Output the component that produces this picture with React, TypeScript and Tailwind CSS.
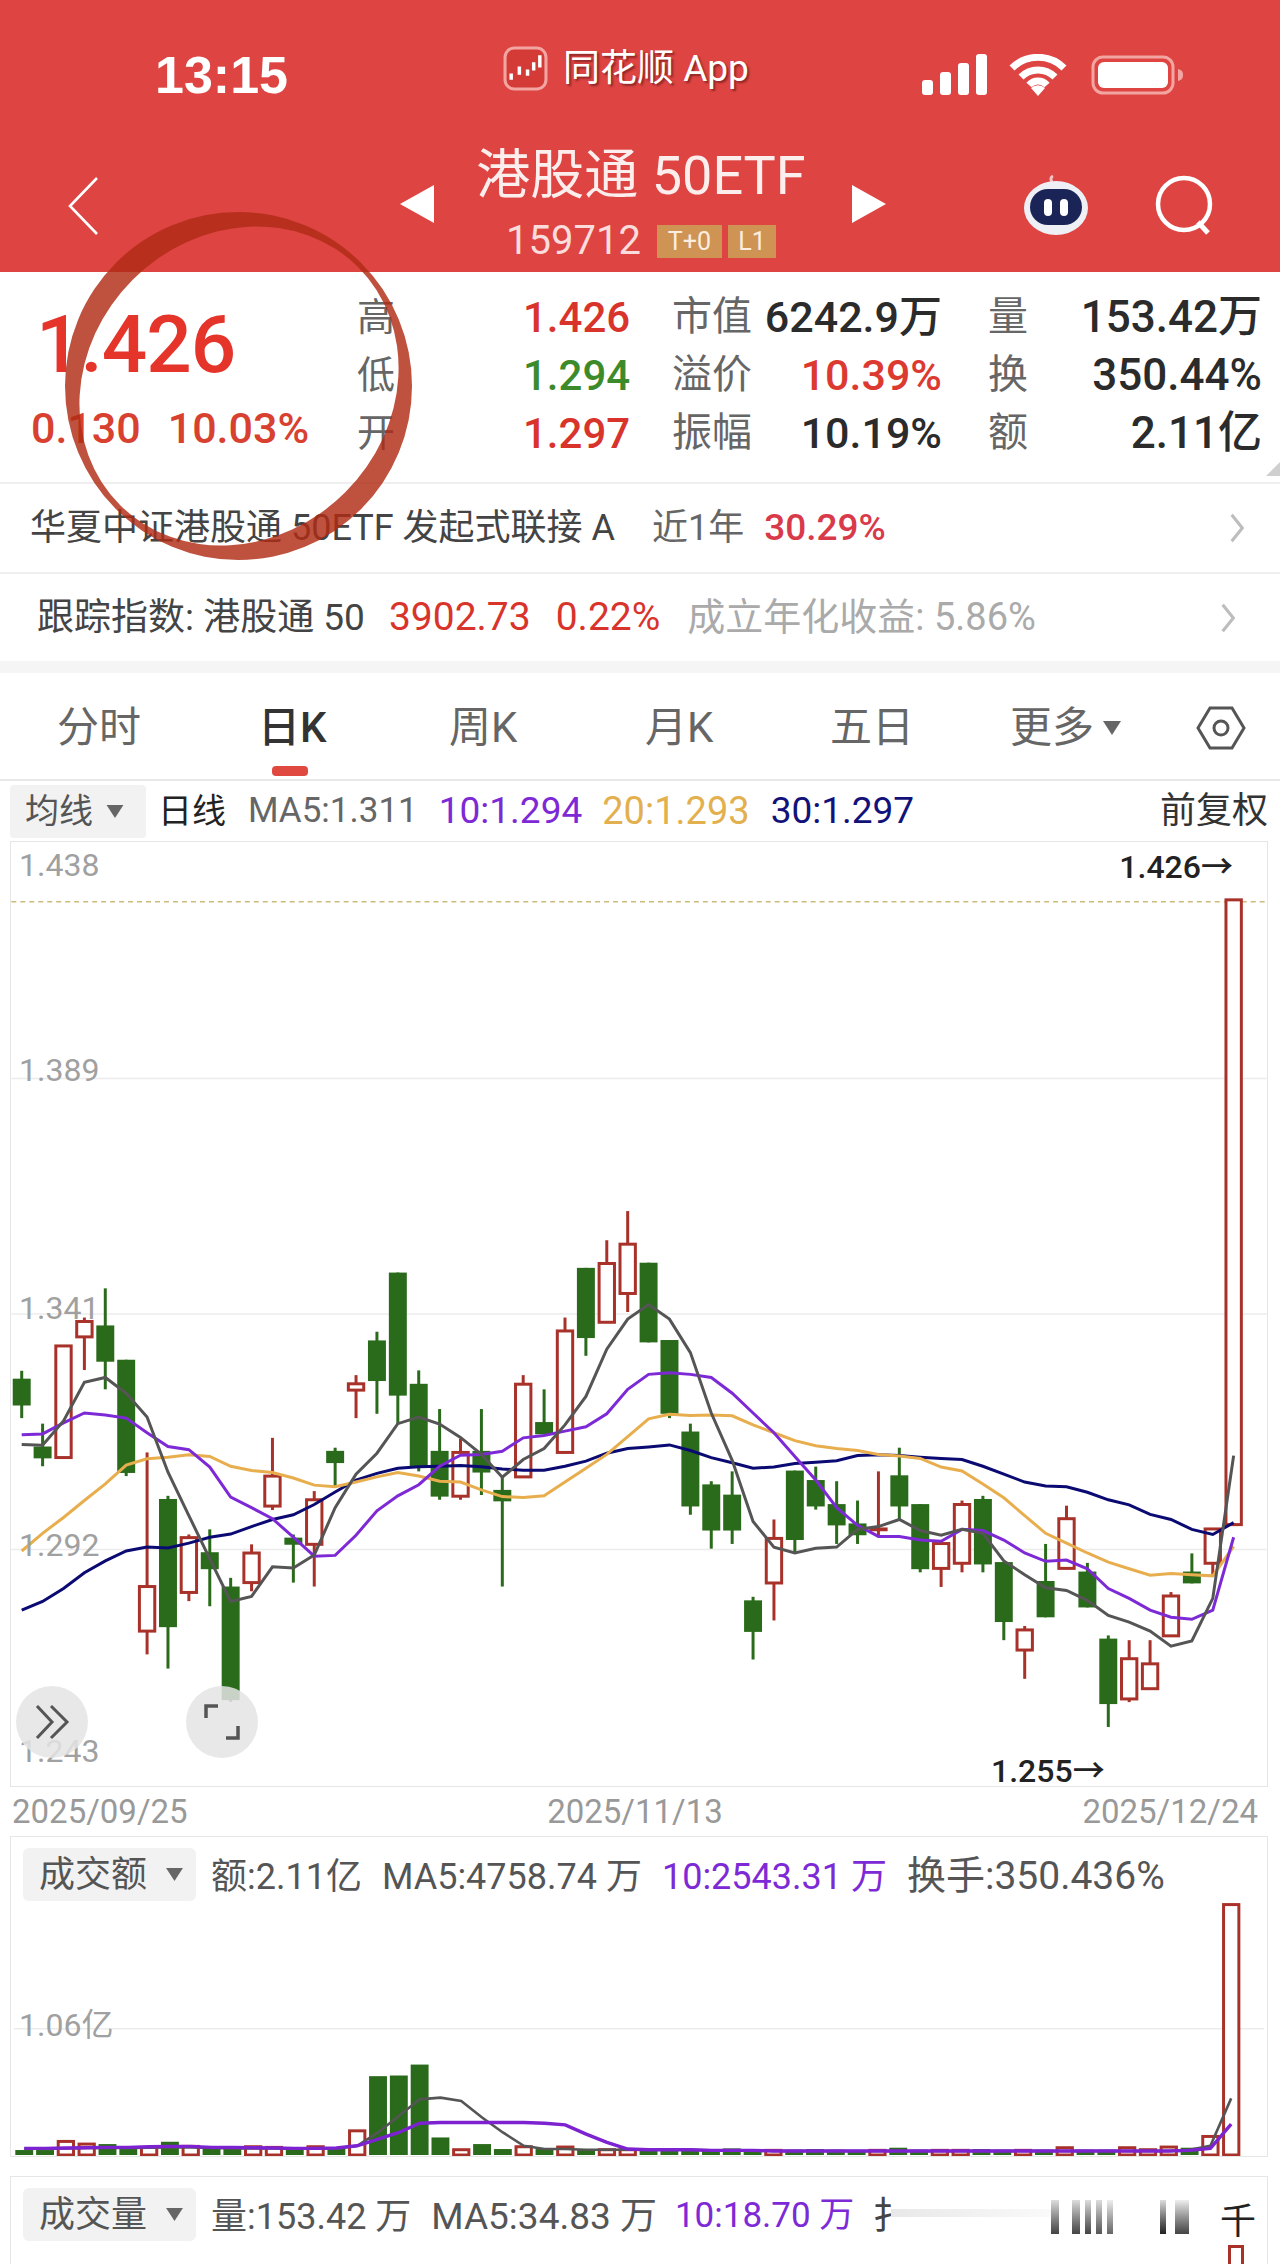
import React from "react";

type Candle = [string, number, number, number, number];

// 坐标取自截图放大图: 类型, 实体上, 实体下, 影线上, 影线下
const CANDLES: Candle[] = [
  ["g", 503, 571, 483, 603], ["g", 675, 705, 617, 725], ["r", 420, 703, 420, 703], ["r", 358, 397, 348, 481],
  ["g", 368, 460, 274, 530], ["g", 455, 742, 455, 750], ["r", 1030, 1143, 690, 1202], ["g", 808, 1133, 800, 1238],
  ["r", 906, 1045, 898, 1067], ["g", 943, 986, 885, 1080], ["g", 1030, 1318, 1008, 1322], ["r", 945, 1020, 923, 1042],
  ["r", 750, 826, 653, 836], ["g", 906, 924, 898, 1020], ["r", 810, 923, 788, 1030], ["g", 686, 717, 678, 775],
  ["r", 516, 532, 494, 603], ["g", 406, 509, 384, 592], ["g", 234, 546, 234, 618], ["g", 516, 725, 482, 738],
  ["g", 686, 802, 580, 810], ["r", 690, 801, 655, 810], ["g", 686, 741, 580, 798], ["g", 785, 814, 750, 1030],
  ["r", 517, 752, 494, 752], ["g", 613, 644, 530, 644], ["r", 382, 690, 348, 690], ["g", 222, 400, 222, 445],
  ["r", 211, 360, 152, 360], ["r", 162, 287, 78, 334], ["g", 209, 411, 209, 411], ["g", 405, 592, 405, 603],
  ["g", 637, 827, 617, 848], ["g", 771, 888, 763, 934], ["g", 797, 888, 738, 922], ["g", 1065, 1145, 1056, 1215],
  ["r", 908, 1021, 860, 1116], ["g", 736, 912, 736, 945], ["g", 760, 827, 726, 835], ["g", 821, 875, 763, 922],
  ["g", 870, 900, 812, 922], ["r", 884, 886, 738, 905], ["g", 748, 827, 678, 860], ["g", 821, 986, 821, 994],
  ["r", 921, 984, 921, 1031], ["r", 822, 971, 812, 994], ["g", 808, 974, 800, 994], ["g", 968, 1120, 968, 1166],
  ["r", 1140, 1191, 1130, 1264], ["g", 1016, 1108, 922, 1108], ["r", 858, 984, 825, 984], ["g", 992, 1083, 970, 1083],
  ["g", 1162, 1328, 1154, 1386], ["r", 1213, 1315, 1166, 1323], ["r", 1226, 1289, 1166, 1289], ["r", 1054, 1155, 1044, 1155],
  ["g", 992, 1022, 946, 1022], ["r", 884, 971, 884, 1005], ["r", -711, 873, -711, 873],
];

const MA5 = [670, 672, 610, 512, 500, 540, 600, 740, 850, 960, 1068, 1055, 980, 983, 950, 830, 745, 692, 617, 600, 618, 652, 695, 753, 708, 680, 620, 548, 428, 352, 315, 352, 437, 590, 710, 865, 930, 945, 933, 930, 885, 878, 860, 888, 900, 885, 895, 965, 1000, 1033, 1040, 1065, 1103, 1120, 1143, 1181, 1168, 1060, 698];
const MA10 = [645, 643, 615, 590, 595, 603, 640, 675, 683, 727, 803, 830, 858, 905, 953, 951, 900, 838, 800, 772, 725, 697, 695, 687, 653, 647, 636, 625, 592, 530, 492, 488, 492, 500, 540, 590, 640, 700, 760, 830, 875, 903, 903, 912, 915, 885, 888, 912, 945, 966, 963, 985, 1035, 1060, 1090, 1108, 1113, 1090, 905];
const MA20 = [940, 895, 855, 812, 770, 722, 706, 702, 696, 700, 725, 736, 741, 755, 773, 777, 765, 752, 741, 750, 763, 765, 785, 802, 804, 800, 765, 730, 695, 650, 605, 593, 596, 595, 597, 620, 640, 660, 673, 680, 685, 695, 699, 705, 727, 737, 770, 805, 850, 895, 920, 945, 968, 985, 1001, 997, 1000, 1003, 928];
const MA30 = [1090, 1068, 1035, 995, 965, 940, 930, 932, 920, 905, 897, 878, 860, 848, 822, 790, 760, 743, 730, 726, 725, 723, 726, 732, 735, 735, 725, 712, 692, 680, 676, 671, 685, 703, 716, 730, 727, 718, 715, 711, 698, 696, 698, 702, 705, 708, 725, 745, 765, 775, 777, 791, 810, 823, 847, 860, 885, 898, 868];

const VOL = [1053, 1053, 1027, 1035, 1035, 1050, 1045, 1028, 1042, 1048, 1048, 1043, 1045, 1048, 1043, 1045, 995, 830, 828, 795, 1015, 1052, 1035, 1050, 1043, 1050, 1044, 1050, 1052, 1052, 1050, 1048, 1050, 1052, 1048, 1050, 1054, 1052, 1050, 1052, 1056, 1054, 1046, 1052, 1054, 1054, 1050, 1052, 1054, 1052, 1046, 1052, 1052, 1046, 1052, 1044, 1046, 1012, 312];
const VOL5 = [1048, 1048, 1048, 1047, 1047, 1047, 1046, 1045, 1045, 1047, 1048, 1048, 1048, 1049, 1049, 1048, 1040, 1000, 950, 900, 895, 905, 955, 1000, 1040, 1050, 1050, 1052, 1052, 1052, 1052, 1052, 1052, 1054, 1054, 1054, 1056, 1056, 1056, 1056, 1056, 1056, 1056, 1056, 1056, 1056, 1056, 1056, 1056, 1056, 1056, 1056, 1056, 1056, 1056, 1056, 1052, 1040, 897];
const VOL10 = [1048, 1048, 1047, 1046, 1045, 1045, 1043, 1042, 1042, 1045, 1045, 1046, 1047, 1048, 1048, 1047, 1040, 1020, 1000, 972, 970, 970, 970, 970, 970, 972, 977, 1005, 1030, 1050, 1052, 1052, 1052, 1054, 1054, 1054, 1056, 1056, 1056, 1056, 1056, 1056, 1056, 1056, 1056, 1056, 1056, 1056, 1056, 1056, 1056, 1056, 1056, 1056, 1056, 1056, 1054, 1048, 975];

const xAt = (i: number) => 20.4 + 20.94 * i;
const yK = (z: number) => 1180 + z / 2.53;
const yV = (z: number) => 1800 + z / 3;
const toPoints = (arr: number[], fy: (z: number) => number) =>
  arr.map((z, i) => `${xAt(i).toFixed(1)},${fy(z).toFixed(1)}`).join(" ");

const GREEN = "#2a6a1b";
const RED = "#a8322a";

function KChart() {
  return (
    <svg viewBox="10 841 1258 946" className="absolute inset-0 w-full h-full">
      {[1078, 1314, 1550].map((y) => (
        <line key={y} x1={10} x2={1268} y1={y} y2={y} stroke="#ececec" strokeWidth={1.5} />
      ))}
      <line x1={10} x2={1268} y1={901} y2={901} stroke="#cdbb7c" strokeWidth={1.5} strokeDasharray="5 4" />
      {CANDLES.map(([t, top, bottom, wt, wb], i) => {
        const c = t === "g" ? GREEN : RED;
        const x = xAt(i);
        return (
          <g key={i}>
            <line x1={x} x2={x} y1={yK(wt)} y2={yK(wb)} stroke={c} strokeWidth={3} />
            {t === "g" ? (
              <rect x={x - 9} y={yK(top)} width={18} height={yK(bottom) - yK(top)} fill={c} />
            ) : (
              <rect x={x - 7.7} y={yK(top)} width={15.4} height={yK(bottom) - yK(top)} fill="#fff" stroke={c} strokeWidth={3} />
            )}
          </g>
        );
      })}
      <polyline points={toPoints(MA30, yK)} fill="none" stroke="#0a0a72" strokeWidth={3} />
      <polyline points={toPoints(MA20, yK)} fill="none" stroke="#e8ae4e" strokeWidth={3} />
      <polyline points={toPoints(MA10, yK)} fill="none" stroke="#7d2ad6" strokeWidth={3} />
      <polyline points={toPoints(MA5, yK)} fill="none" stroke="#555555" strokeWidth={3} />
    </svg>
  );
}

function VolChart() {
  return (
    <svg viewBox="10 1836 1258 321" className="absolute inset-0 w-full h-full">
      <line x1={10} x2={1268} y1={2029} y2={2029} stroke="#ececec" strokeWidth={1.5} />
      {VOL.map((z, i) => {
        const t = CANDLES[i][0];
        const x = xAt(i);
        return t === "g" ? (
          <rect key={i} x={x - 9} y={yV(z)} width={18} height={2156 - yV(z)} fill={GREEN} />
        ) : (
          <rect key={i} x={x - 7.7} y={yV(z)} width={15.4} height={2156 - yV(z)} fill="#fff" stroke={RED} strokeWidth={3} />
        );
      })}
      <polyline points={toPoints(VOL5, yV)} fill="none" stroke="#555555" strokeWidth={2.6} />
      <polyline points={toPoints(VOL10, yV)} fill="none" stroke="#7d22d0" strokeWidth={3.4} />
    </svg>
  );
}

function Caret({ className }: { className: string }) {
  return (
    <svg viewBox="0 0 20 16" className={className}>
      <path d="M1 1h18L10 15z" fill="#666" />
    </svg>
  );
}

function Chevron() {
  return (
    <svg viewBox="0 0 18 34" className="w-[16px] h-[34px]">
      <path d="M3 2l12 15L3 32" fill="none" stroke="#bdbdbd" strokeWidth={3.5} />
    </svg>
  );
}

const STATS = [
  { a: "高", av: "1.426", ac: "text-[#d8342c]", b: "市值", bv: "6242.9万", bc: "text-[#2b2b2b]", c: "量", cv: "153.42万" },
  { a: "低", av: "1.294", ac: "text-[#3c8a2a]", b: "溢价", bv: "10.39%", bc: "text-[#dc3a30]", c: "换", cv: "350.44%" },
  { a: "开", av: "1.297", ac: "text-[#d8342c]", b: "振幅", bv: "10.19%", bc: "text-[#2b2b2b]", c: "额", cv: "2.11亿" },
];

const TABS = [
  { t: "分时", w: "w-[258px]", pl: "pl-[57px]" },
  { t: "日K", w: "w-[191px]", pl: "pl-[0px]", active: true },
  { t: "周K", w: "w-[196px]", pl: "pl-[0px]" },
  { t: "月K", w: "w-[185px]", pl: "pl-[0px]" },
  { t: "五日", w: "w-[180px]", pl: "pl-[0px]" },
];

export default function App() {
  return (
    <div className="relative w-[1280px] h-[2264px] overflow-hidden bg-white text-[#555] font-['Roboto','Noto_Sans_CJK_SC',sans-serif]">
      {/* 顶部红色区域 */}
      <header className="h-[272px] bg-[#dd4442] text-white">
        <div className="h-[150px] flex items-center">
          <div className="w-[503px] pl-[155px] text-[52px] font-bold font-['Liberation_Sans',sans-serif]">13:15</div>
          <div className="w-[419px] flex items-center gap-[15px] mb-[14px]">
            <svg viewBox="0 0 44 44" className="w-[45px] h-[45px]">
              <rect x="2" y="2" width="40" height="40" rx="9" fill="#d43a36" stroke="#f3a5a2" strokeWidth="3" />
              <path d="M8 27v6M16 20v8M24 23v6M30 16v8M36 9v12" stroke="#fff" strokeWidth="3.4" />
            </svg>
            <span className="text-[37px] leading-none [text-shadow:2px_2px_2px_rgba(90,20,20,0.6)]">同花顺 App</span>
          </div>
          <div className="flex items-center">
            <svg viewBox="0 0 66 42" className="w-[66px] h-[42px]">
              <rect x="0" y="26" width="11" height="15" rx="3" fill="#fff" />
              <rect x="18" y="18" width="11" height="23" rx="3" fill="#fff" />
              <rect x="36" y="9" width="11" height="32" rx="3" fill="#fff" />
              <rect x="54" y="0" width="11" height="41" rx="3" fill="#fff" />
            </svg>
            <svg viewBox="0 0 58 42" className="w-[58px] h-[42px] ml-[21px]">
              <path d="M3 14a37 37 0 0 1 52 0M12 23a24 24 0 0 1 34 0M20 31a12 12 0 0 1 18 0" fill="none" stroke="#fff" strokeWidth="7" />
              <path d="M29 42l-7-8a10 10 0 0 1 14 0z" fill="#fff" />
            </svg>
            <svg viewBox="0 0 94 44" className="w-[94px] h-[44px] ml-[24px]">
              <rect x="2" y="4" width="80" height="36" rx="10" fill="none" stroke="#f3a5a2" strokeWidth="3" />
              <rect x="7" y="9" width="70" height="26" rx="6" fill="#fff" />
              <path d="M87 16c4 1 5 3 5 6s-1 5-5 6z" fill="#f3a5a2" />
            </svg>
          </div>
        </div>
        <div className="h-[122px] flex">
          <div className="w-[400px] pl-[66px] pt-[26px] flex">
            <svg viewBox="0 0 34 60" className="w-[34px] h-[60px]">
              <path d="M31 2L4 30l27 28" fill="none" stroke="#fff" strokeWidth="2.6" />
            </svg>
          </div>
          <div className="pt-[35px]">
            <svg viewBox="0 0 34 38" className="w-[34px] h-[38px]">
              <path d="M34 0v38L0 19z" fill="#fff" />
            </svg>
          </div>
          <div className="w-[418px] pr-[4px] flex flex-col items-center">
            <div className="h-[52px] leading-[52px] text-[54px] text-[#fdeeee]">港股通 50ETF</div>
            <div className="mt-[21px] flex items-center h-[36px]">
              <span className="text-[40px] text-[#fbdcdc] mr-[16px]">159712</span>
              <span className="w-[65px] h-[33px] bg-[#cf9454] text-[25px] leading-[33px] text-center text-[#fbeee0]">T+0</span>
              <span className="w-[48px] h-[33px] ml-[6px] bg-[#cf9454] text-[25px] leading-[33px] text-center text-[#fbeee0]">L1</span>
            </div>
          </div>
          <div className="pt-[35px]">
            <svg viewBox="0 0 34 38" className="w-[34px] h-[38px]">
              <path d="M0 0v38l34-19z" fill="#fff" />
            </svg>
          </div>
          <svg viewBox="0 0 66 62" className="w-[66px] h-[62px] ml-[137px] mt-[24px]">
            <path d="M29 8c-2-3-1-5 1-6" fill="none" stroke="#f2c6c6" strokeWidth="3" />
            <ellipse cx="33" cy="34" rx="32" ry="27" fill="#eef0f6" />
            <rect x="7" y="15" width="52" height="36" rx="18" fill="#1b2456" />
            <rect x="21" y="25" width="8" height="17" rx="4" fill="#fff" />
            <rect x="37" y="25" width="8" height="17" rx="4" fill="#fff" />
          </svg>
          <svg viewBox="0 0 62 60" className="w-[62px] h-[60px] ml-[65px] mt-[25px]">
            <circle cx="30" cy="29" r="26" fill="none" stroke="#fff" strokeWidth="4.5" />
            <path d="M44 47l10 11" stroke="#fff" strokeWidth="5" />
          </svg>
        </div>
      </header>

      {/* 报价 */}
      <section className="h-[210px] flex relative">
        <div className="w-[357px] pl-[36px]">
          <div className="h-[125px] pt-[27px] text-[80px] leading-[92px] font-medium text-[#e5352b] tracking-[-1px]">1.426</div>
          <div className="-ml-[5px] flex gap-[27px] text-[43px] leading-[62px] font-medium text-[#d8402f]">
            <span>0.130</span>
            <span>10.03%</span>
          </div>
        </div>
        <div className="pt-[16px]">
          {STATS.map((s) => (
            <div key={s.a} className="flex items-center h-[58px]">
              <span className="w-[166px] text-[38px] text-[#666]">{s.a}</span>
              <span className={`w-[149px] text-[42px] font-medium ${s.ac}`}>{s.av}</span>
              <div className="w-[270px] flex justify-between items-center">
                <span className="text-[40px] text-[#666]">{s.b}</span>
                <span className={`text-[43px] font-medium ${s.bc}`}>{s.bv}</span>
              </div>
              <div className="w-[274px] ml-[46px] flex justify-between items-center">
                <span className="text-[40px] text-[#666]">{s.c}</span>
                <span className="text-[44px] font-medium text-[#2b2b2b]">{s.cv}</span>
              </div>
            </div>
          ))}
        </div>
        <div className="absolute right-0 bottom-[6px] w-0 h-0 border-l-[14px] border-l-transparent border-b-[14px] border-b-[#cfcfcf]" />
      </section>

      {/* 基金信息 */}
      <div className="h-[90px] border-t-2 border-[#efefef] flex items-center pl-[30px] pr-[35px] text-[36px]">
        <span className="text-[#444]">华夏中证港股通 50ETF 发起式联接 A</span>
        <span className="ml-[37px] text-[#666]">近1年</span>
        <span className="ml-[20px] text-[37px] font-medium text-[#d93a4a]">30.29%</span>
        <div className="ml-auto"><Chevron /></div>
      </div>
      <div className="h-[89px] border-t-2 border-[#efefef] flex items-center pl-[37px] pr-[44px] text-[37px]">
        <span className="text-[#444]">跟踪指数: 港股通 50</span>
        <span className="ml-[24px] text-[39px] text-[#d8342c]">3902.73</span>
        <span className="ml-[25px] text-[39px] text-[#d8342c]">0.22%</span>
        <span className="ml-[27px] text-[38px] text-[#aaaaaa]">成立年化收益: 5.86%</span>
        <div className="ml-auto"><Chevron /></div>
      </div>
      <div className="h-[12px] bg-[#f5f5f5]" />

      {/* 周期切换 */}
      <nav className="h-[108px] flex items-center pt-[3px] text-[42px] text-[#666] border-b-2 border-[#e8e8e8]">
        {TABS.map((tab) => (
          <div key={tab.t} className={`relative ${tab.w} ${tab.pl}`}>
            <span className={tab.active ? "font-medium text-[#333]" : ""}>{tab.t}</span>
            {tab.active && <div className="absolute left-[14px] top-[70px] w-[36px] h-[10px] rounded-[4px] bg-[#e0493f]" />}
          </div>
        ))}
        <span>更多</span>
        <Caret className="w-[20px] h-[16px] ml-[8px]" />
        <svg viewBox="0 0 50 46" className="w-[50px] h-[46px] ml-[74px]">
          <path d="M14 3h22l12 20-12 20H14L2 23z" fill="none" stroke="#555" strokeWidth="3" />
          <circle cx="25" cy="23" r="7" fill="none" stroke="#555" strokeWidth="3" />
        </svg>
      </nav>

      {/* 均线 */}
      <div className="h-[60px] flex items-center pl-[10px] pr-[12px] text-[34px]">
        <div className="w-[136px] h-[53px] rounded-[4px] bg-[#f2f2f2] flex items-center pl-[15px] gap-[12px] text-[#555]">
          均线<Caret className="w-[20px] h-[15px]" />
        </div>
        <span className="ml-[12px] text-[#222]">日线</span>
        <span className="ml-[22px] text-[35px] text-[#666]">MA5:1.311</span>
        <span className="ml-[21px] text-[37px] text-[#7d2ad6]">10:1.294</span>
        <span className="ml-[20px] text-[38px] text-[#e3b04f]">20:1.293</span>
        <span className="ml-[21px] text-[37px] text-[#12127a]">30:1.297</span>
        <span className="ml-auto text-[36px] text-[#333]">前复权</span>
      </div>

      {/* K线图 */}
      <div className="relative ml-[10px] w-[1258px] h-[946px] border border-[#e6e6e6] text-[32px] text-[#a0a0a0]">
        <KChart />
        <span className="absolute left-[8px] top-[-1px]">1.438</span>
        <span className="absolute left-[8px] top-[204px]">1.389</span>
        <span className="absolute left-[8px] top-[442px]">1.341</span>
        <span className="absolute left-[8px] top-[679px]">1.292</span>
        <span className="absolute left-[8px] top-[885px]">1.243</span>
        <span className="absolute right-[34px] top-[1px] text-[#222] font-medium">1.426→</span>
        <span className="absolute left-[980px] top-[905px] text-[#222] font-medium">1.255→</span>
        <div className="absolute left-[5px] top-[844px] w-[72px] h-[72px] rounded-full bg-[#e4e4e4]/85 flex items-center justify-center">
          <svg viewBox="0 0 36 36" className="w-[36px] h-[36px]">
            <path d="M3 2l15 16L3 34M17 2l16 16-16 16" fill="none" stroke="#555" strokeWidth="3" />
          </svg>
        </div>
        <div className="absolute left-[175px] top-[844px] w-[72px] h-[72px] rounded-full bg-[#e4e4e4]/85 flex items-center justify-center">
          <svg viewBox="0 0 38 38" className="w-[38px] h-[38px]">
            <path d="M15 3H3v12M23 35h12V23" fill="none" stroke="#555" strokeWidth="3.5" />
          </svg>
        </div>
      </div>

      <div className="h-[49px] pl-[12px] pr-[22px] flex items-center justify-between text-[33px] text-[#999]">
        <span>2025/09/25</span>
        <span>2025/11/13</span>
        <span>2025/12/24</span>
      </div>

      {/* 成交额 */}
      <div className="relative ml-[10px] w-[1258px] h-[321px] border border-[#e6e6e6] text-[36px]">
        <VolChart />
        <div className="relative flex items-center h-[53px] mt-[11px] ml-[12px]">
          <div className="w-[173px] h-[53px] rounded-[6px] bg-[#f2f2f2] flex items-center pl-[16px] gap-[18px] text-[#555]">
            成交额<Caret className="w-[19px] h-[15px]" />
          </div>
          <span className="ml-[15px] text-[#555] pt-[5px]">额:2.11亿</span>
          <span className="ml-[20px] text-[#555] pt-[5px]">MA5:4758.74 万</span>
          <span className="ml-[20px] text-[#7d2ad6] pt-[5px]">10:2543.31 万</span>
          <span className="ml-[20px] text-[39px] text-[#555] pt-[3px]">换手:350.436%</span>
        </div>
        <span className="absolute left-[8px] top-[164px] text-[32px] text-[#a0a0a0]">1.06亿</span>
      </div>

      {/* 成交量 */}
      <div className="relative mt-[19px] ml-[10px] w-[1258px] h-[100px] border border-b-0 border-[#e6e6e6] text-[37px]">
        <div className="flex items-center h-[53px] mt-[11px] ml-[12px]">
          <div className="w-[173px] h-[53px] rounded-[6px] bg-[#f2f2f2] flex items-center pl-[16px] gap-[18px] text-[36px] text-[#555]">
            成交量<Caret className="w-[19px] h-[15px]" />
          </div>
          <span className="ml-[15px] text-[36px] text-[#555] pt-[4px]">量:153.42 万</span>
          <span className="ml-[20px] text-[37px] text-[#555] pt-[4px]">MA5:34.83 万</span>
          <span className="ml-[18px] text-[35px] text-[#7d2ad6] pt-[4px]">10:18.70 万</span>
          <span className="ml-[18px] text-[37px] text-[#444] pt-[4px]">扌</span>
        </div>
        <div className="absolute left-[1040px] top-[23px] flex gap-[5px] h-[34px]">
          <i className="block w-[8px] bg-linear-to-b from-[#ddd] to-[#444]" />
          <i className="block w-[8px] ml-[8px] bg-linear-to-b from-[#ddd] to-[#444]" />
          <i className="block w-[6px] bg-linear-to-b from-[#ddd] to-[#444]" />
          <i className="block w-[6px] bg-linear-to-b from-[#ddd] to-[#555]" />
          <i className="block w-[6px] bg-linear-to-b from-[#eee] to-[#666]" />
          <i className="block w-[6px] ml-[42px] bg-linear-to-b from-[#ddd] to-[#222]" />
          <i className="block w-[14px] ml-[4px] bg-linear-to-b from-[#eee] to-[#444]" />
        </div>
        <div className="absolute left-[880px] top-[32px] w-[160px] h-[8px] bg-linear-to-r from-[#e8e8e8] to-[#fafafa]" />
        <span className="absolute left-[1209px] top-[18px] text-[#222] text-[36px]">千</span>
        <div className="absolute left-[1217px] top-[68px] w-[16px] h-[30px] border-[3px] border-b-0 border-[#a8322a]" />
      </div>

      {/* 手绘红圈 */}
      <svg viewBox="0 0 1280 2264" className="absolute inset-0 w-[1280px] h-[2264px] pointer-events-none">
        <path
          fillRule="evenodd"
          fill="#b02c15"
          fillOpacity="0.82"
          d="M65 386a173.5 174 0 1 0 347 0a173.5 174 0 1 0 -347 0zM120 505A168 150 -45 1 1 358 267A168 150 -45 1 1 120 505z"
        />
      </svg>
    </div>
  );
}
